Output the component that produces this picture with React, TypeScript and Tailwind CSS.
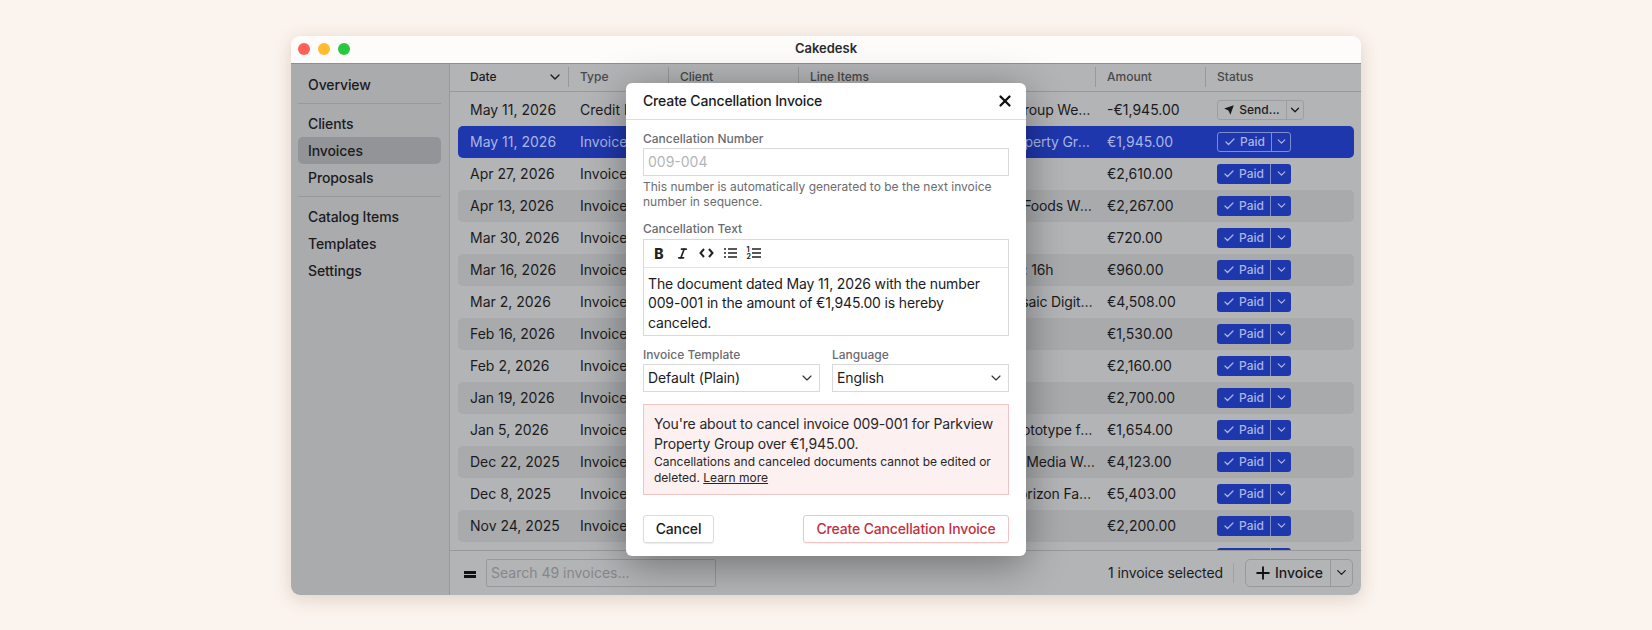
import { Check, ChevronDown, Italic, Plus, X } from "lucide-react";

const font = "font-['Inter',sans-serif]";

const rows = [
  { date: "May 11, 2026", type: "Credit Note", items: "Monthly Retainers: Westrbrook Group Website Care", amount: "-€1,945.00", status: "send" },
  { date: "May 11, 2026", type: "Invoice", items: "Monthly Retainer 2: Parkview Property Group Website", amount: "€1,945.00", status: "paid" },
  { date: "Apr 27, 2026", type: "Invoice", items: "", amount: "€2,610.00", status: "paid" },
  { date: "Apr 13, 2026", type: "Invoice", items: "Monthly Retainers: Fresh Market Foods Website Care", amount: "€2,267.00", status: "paid" },
  { date: "Mar 30, 2026", type: "Invoice", items: "", amount: "€720.00", status: "paid" },
  { date: "Mar 16, 2026", type: "Invoice", items: "Development & Code Review Hrs: 16h", amount: "€960.00", status: "paid" },
  { date: "Mar 2, 2026", type: "Invoice", items: "Monthly Hosting Retainers 2: Mosaic Digital Website", amount: "€4,508.00", status: "paid" },
  { date: "Feb 16, 2026", type: "Invoice", items: "", amount: "€1,530.00", status: "paid" },
  { date: "Feb 2, 2026", type: "Invoice", items: "", amount: "€2,160.00", status: "paid" },
  { date: "Jan 19, 2026", type: "Invoice", items: "", amount: "€2,700.00", status: "paid" },
  { date: "Jan 5, 2026", type: "Invoice", items: "Design Retainer and Research Prototype for Website", amount: "€1,654.00", status: "paid" },
  { date: "Dec 22, 2025", type: "Invoice", items: "Monthly Retainer: Social Loft Inc. Media Website Care", amount: "€4,123.00", status: "paid" },
  { date: "Dec 8, 2025", type: "Invoice", items: "Monthly Hosting Retainers 22: Horizon Family Bakery", amount: "€5,403.00", status: "paid" },
  { date: "Nov 24, 2025", type: "Invoice", items: "", amount: "€2,200.00", status: "paid" },
  { date: "Nov 10, 2025", type: "Invoice", items: "", amount: "€1,800.00", status: "paid" },
];

function SideItem({ label, active }: { label: string; active?: boolean }) {
  return (
    <div className={`h-[27px] flex items-center px-[10px] rounded-[5px] text-[14px] font-medium tracking-[-0.1px] text-[#1b1b1d] ${active ? "bg-[#939497]" : ""}`}>
      {label}
    </div>
  );
}

function StatusButton({ status, selected }: { status: string; selected: boolean }) {
  if (status === "send") {
    return (
      <div className="flex h-[20px] w-[87px] text-[12px] font-medium text-[#1b1b1d] border border-[#9d9ea0] rounded-[3px]">
        <div className="w-[69px] flex items-center justify-center gap-[5px] border-r border-[#9d9ea0]">
          <svg width="10" height="10" viewBox="0 0 10 10"><path d="M9.8 0.2 L0.2 3.6 L4.4 5.6 L6.4 9.8 Z" fill="#1b1b1d" /></svg>
          Send...
        </div>
        <div className="flex-1 flex items-center justify-center">
          <ChevronDown size={14} strokeWidth={2.25} />
        </div>
      </div>
    );
  }
  return (
    <div className={`flex h-[20px] w-[74px] rounded-[3px] text-[12px] font-medium text-[#a9b5e4] ${selected ? "border border-[#7c8dd2]" : "bg-[#1f37ac]"}`}>
      <div className="w-[54px] flex items-center justify-center gap-[4px] border-r border-[#7c8dd2]">
        <Check size={12} strokeWidth={2.5} />
        Paid
      </div>
      <div className="flex-1 flex items-center justify-center">
        <ChevronDown size={13} strokeWidth={2.25} />
      </div>
    </div>
  );
}

function HeadCell({ label, className, dark }: { label: string; className: string; dark?: boolean }) {
  return (
    <div className={`${className} shrink-0 flex items-center h-[20px] pl-[11px] border-r border-[#98999b] text-[12px] font-medium ${dark ? "pr-[5px] text-[#1b1b1d]" : "pr-[11px] text-[#48494b]"}`}>
      <span className="flex-1">{label}</span>
      {dark && <ChevronDown size={16} strokeWidth={2} />}
    </div>
  );
}

function Field({ label, gap, children }: { label: string; gap?: string; children: React.ReactNode }) {
  return (
    <div>
      <div className={`text-[12px] leading-[15px] font-medium text-[#6b6c70] ${gap ?? "mb-[2px]"}`}>{label}</div>
      {children}
    </div>
  );
}

function SelectBox({ value }: { value: string }) {
  return (
    <div className="h-[28px] border border-[#d9d9dc] flex items-center justify-between pl-[4px] pr-[4px] text-[14px] tracking-[-0.1px] text-[#1b1b1d]">
      {value}
      <ChevronDown size={16} strokeWidth={1.75} className="text-[#333]" />
    </div>
  );
}

export default function App() {
  return (
    <div className={`${font} w-full h-[630px] bg-[#fbf3ed] flex items-center justify-center overflow-hidden`}>
      <div className="relative w-[1070px] h-[559px] rounded-[9px] overflow-hidden flex flex-col shadow-[0_4px_18px_rgba(90,60,40,0.18)]">
        {/* Title bar */}
        <div className="relative h-[28px] shrink-0 bg-[#fefcfb] flex items-center justify-center text-[13px] font-semibold text-[#2b2b2d] border-b border-[#8e8f91]">
          <div className="absolute left-[7px] top-[7px] flex gap-[8px]">
            <div className="size-[12px] rounded-full bg-[#fe5f57]" />
            <div className="size-[12px] rounded-full bg-[#febc2e]" />
            <div className="size-[12px] rounded-full bg-[#28c840]" />
          </div>
          Cakedesk
        </div>

        <div className="flex-1 flex min-h-0 relative">
          {/* Sidebar */}
          <div className="w-[159px] shrink-0 bg-[#aaabad] border-r border-[#98999b] pl-[7px] pr-[8px] pt-[7px] flex flex-col">
            <SideItem label="Overview" />
            <div className="h-px bg-[#98999b] mt-[5px] mb-[6px]" />
            <SideItem label="Clients" />
            <SideItem label="Invoices" active />
            <SideItem label="Proposals" />
            <div className="h-px bg-[#98999b] mt-[5px] mb-[6px]" />
            <SideItem label="Catalog Items" />
            <SideItem label="Templates" />
            <SideItem label="Settings" />
          </div>

          {/* Main */}
          <div className="flex-1 min-w-0 flex flex-col bg-[#b3b4b6]">
            <div className="h-[28px] shrink-0 flex items-center pl-[9px] border-b border-[#98999b]">
              <HeadCell label="Date" className="w-[110px]" dark />
              <HeadCell label="Type" className="w-[100px]" />
              <HeadCell label="Client" className="w-[130px]" />
              <HeadCell label="Line Items" className="w-[297px]" />
              <HeadCell label="Amount" className="w-[110px]" />
              <div className="px-[11px] text-[12px] font-medium text-[#48494b]">Status</div>
            </div>

            <div className="flex-1 min-h-0 overflow-hidden pt-[2px] pl-[8px] pr-[7px]">
              {rows.map((row, i) => {
                const selected = i === 1;
                const striped = i % 2 === 1 && !selected;
                return (
                  <div
                    key={i}
                    className={`h-[32px] flex items-center rounded-[5px] text-[14px] whitespace-nowrap ${selected ? "bg-[#1f37ac] text-[#a9b5e4]" : striped ? "bg-[#a9aaac] text-[#1b1b1d]" : "text-[#1b1b1d]"}`}
                  >
                    <div className="w-[110px] pl-[12px]">{row.date}</div>
                    <div className="w-[100px] pl-[12px] truncate">{row.type}</div>
                    <div className="w-[130px]" />
                    <div className="w-[298px] pl-[12px] truncate tracking-[-0.15px]">{row.items}</div>
                    <div className="w-[109px] pl-[11px]">{row.amount}</div>
                    <div className="pl-[12px]">
                      <StatusButton status={row.status} selected={selected} />
                    </div>
                  </div>
                );
              })}
            </div>

            {/* Footer */}
            <div className="h-[45px] shrink-0 border-t border-[#98999b] flex items-center pl-[14px] pr-[8px]">
              <div className="flex flex-col gap-[1px] mr-[10px] mt-[4px]">
                <div className="w-[12px] h-[3px] bg-[#111]" />
                <div className="w-[12px] h-[3px] bg-[#111]" />
              </div>
              <div className="w-[230px] h-[28px] border border-[#98999b] rounded-[2px] flex items-center px-[4px] text-[14px] text-[#86878a]">
                Search 49 invoices...
              </div>
              <div className="ml-auto text-[14px] tracking-[-0.1px] text-[#1b1b1d]">1 invoice selected</div>
              <div className="w-px h-[20px] bg-[#a0a1a3] ml-[10px] mr-[11px]" />
              <div className="flex h-[28px] w-[108px] border border-[#98999b] rounded-[5px] text-[14px] font-medium text-[#1b1b1d]">
                <div className="w-[85px] flex items-center justify-center gap-[2px] border-r border-[#98999b]">
                  <Plus size={20} strokeWidth={2.25} className="text-[#111]" />
                  Invoice
                </div>
                <div className="flex-1 flex items-center justify-center">
                  <ChevronDown size={15} strokeWidth={2} />
                </div>
              </div>
            </div>
          </div>
        </div>

        {/* Modal */}
        <div className="absolute left-[335px] top-[47px] w-[400px] h-[473px] bg-white rounded-[6px] shadow-[0_8px_40px_rgba(0,0,0,0.38)]">
          <div className="h-[37px] border-b border-[#dcdcde] flex items-center justify-between pl-[17px] pr-[12px] text-[14px] font-medium tracking-[-0.15px] text-[#1b1b1d]">
            Create Cancellation Invoice
            <X size={18} strokeWidth={3} className="text-[#111]" />
          </div>
          <div className="px-[17px] pt-[11px]">
            <Field label="Cancellation Number">
              <div className="h-[28px] border border-[#d9d9dc] flex items-center px-[4px] text-[14px] text-[#b4b4b8]">009-004</div>
            </Field>
            <div className="mt-[3px] text-[12px] leading-[15px] text-[#6b6c70]">
              This number is automatically generated to be the next invoice number in sequence.
            </div>
            <div className="mt-[12px]">
              <Field label="Cancellation Text" gap="mb-[3px]">
                <div className="border border-[#d9d9dc]">
                  <div className="h-[28px] border-b border-[#e4e4e6] flex items-center text-[#222]">
                    <span className="ml-[10px] w-[10px] text-center text-[14px] font-extrabold">B</span>
                    <Italic size={13} strokeWidth={3} className="ml-[12px] text-[#222]" />
                    <svg className="ml-[10px]" width="15" height="12" viewBox="0 0 15 12" fill="none" stroke="#222" strokeWidth="2"><path d="M5 2 L1.5 6 L5 10 M10 2 L13.5 6 L10 10" /></svg>
                    <svg className="ml-[10px]" width="13" height="12" viewBox="0 0 13 12" fill="none" stroke="#222" strokeWidth="1.5"><path d="M4 2 H13 M4 6 H13 M4 10 H13 M0 2 H2 M0 6 H2 M0 10 H2" /></svg>
                    <svg className="ml-[9px]" width="15" height="14" viewBox="0 0 15 14" fill="none" stroke="#222" strokeWidth="1.5">
                      <path d="M6 3 H15 M6 7 H15 M6 11 H15" />
                      <text x="0.5" y="6" fontSize="7" fontWeight="700" fill="#222" stroke="none">1</text>
                      <text x="0.5" y="13" fontSize="7" fontWeight="700" fill="#222" stroke="none">2</text>
                    </svg>
                  </div>
                  <div className="h-[67px] px-[4px] pt-[6px] text-[14px] leading-[19.5px] tracking-[-0.15px] text-[#1b1b1d]">
                    The document dated May 11, 2026 with the number 009-001 in the amount of €1,945.00 is hereby canceled.
                  </div>
                </div>
              </Field>
            </div>
            <div className="mt-[11px] grid grid-cols-[177px_177px] gap-x-[12px]">
              <Field label="Invoice Template"><SelectBox value="Default (Plain)" /></Field>
              <Field label="Language"><SelectBox value="English" /></Field>
            </div>
            <div className="mt-[12px] h-[91px] border border-[#efc4c4] bg-[#fdf0f0] px-[10px] pt-[9px] text-[#27272a]">
              <div className="text-[14px] leading-[20px] tracking-[-0.15px]">You're about to cancel invoice 009-001 for Parkview Property Group over €1,945.00.</div>
              <div className="text-[12px] leading-[16.5px]">
                Cancellations and canceled documents cannot be edited or deleted. <span className="underline">Learn more</span>
              </div>
            </div>
            <div className="mt-[20px] flex justify-between">
              <div className="h-[28px] w-[71px] border border-[#dcdcde] rounded-[3px] shadow-[0_1px_1px_rgba(0,0,0,0.08)] flex items-center justify-center text-[14px] font-medium tracking-[-0.15px] text-[#1b1b1d]">Cancel</div>
              <div className="h-[28px] w-[206px] border border-[#efc4c4] rounded-[3px] shadow-[0_1px_1px_rgba(0,0,0,0.06)] flex items-center justify-center text-[14px] font-medium tracking-[-0.15px] text-[#c23040]">Create Cancellation Invoice</div>
            </div>
          </div>
        </div>
      </div>
    </div>
  );
}
